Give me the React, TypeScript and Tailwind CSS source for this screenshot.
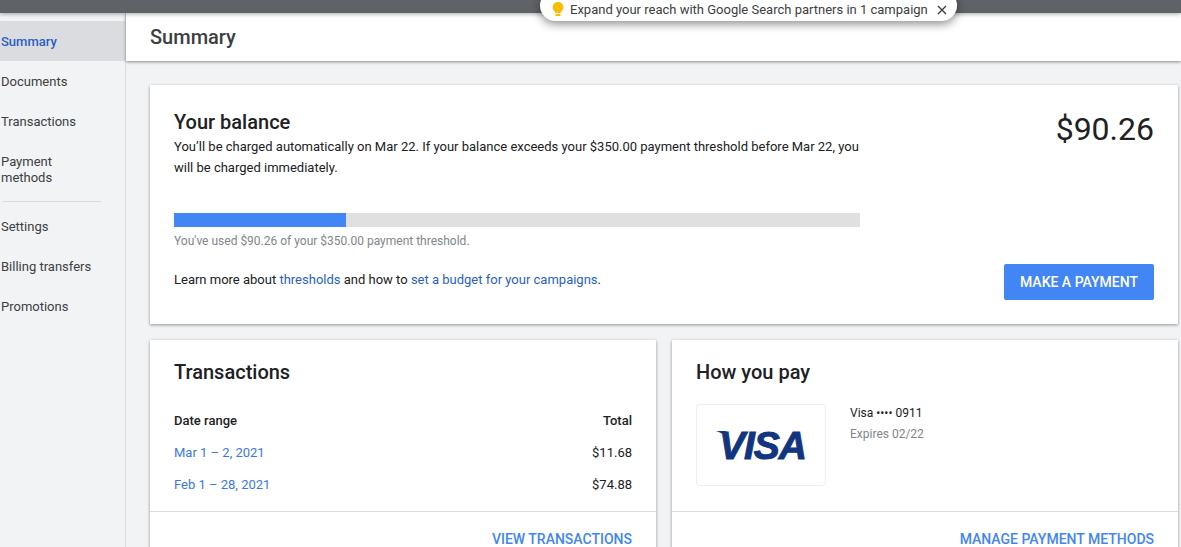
import type { FC } from "react";

const navTop = ["Documents", "Transactions"];
const navBottom = ["Settings", "Billing transfers", "Promotions"];

const NavItem: FC<{ label: string }> = ({ label }) => (
  <div className="h-10 flex items-center pl-[1px] pt-[2px] text-[13px] text-[#3c4043]">{label}</div>
);

const App: FC = () => {
  return (
    <div className="relative h-[547px] w-[1181px] overflow-hidden bg-[#f1f3f4] font-['Roboto',sans-serif]">
      <div className="relative z-10 h-[13px] bg-[#5f6368] shadow-[0_1px_4px_rgba(0,0,0,0.35)]" />

      {/* tip */}
      <div className="absolute left-[540px] top-[-10px] z-20 h-[31px] w-[417px] rounded-full bg-white shadow-[0_3px_10px_rgba(0,0,0,0.45)] flex items-center pt-[9px] pl-[10px] text-[13px] text-[#3c4043]">
        <svg width="16" height="16" viewBox="0 0 16 16" className="mt-[-2px]">
          <path d="M8 1a5.2 5.2 0 0 0-3 9.5V12h6v-1.5A5.2 5.2 0 0 0 8 1z" fill="#fbbc04" />
          <rect x="5.5" y="13" width="5" height="2" fill="#fbbc04" />
        </svg>
        <span className="ml-[4px]">Expand your reach with Google Search partners in 1 campaign</span>
        <svg width="10" height="10" viewBox="0 0 10 10" className="ml-[9px]" stroke="#3c4043" strokeWidth="1.4">
          <path d="M1 1l8 8M9 1l-8 8" />
        </svg>
      </div>

      <div className="flex h-[534px]">
        {/* sidebar */}
        <aside className="w-[126px] shrink-0 border-r border-[#dadce0] pt-2">
          <div className="h-10 flex items-center pl-[1px] pt-[2px] bg-[#dadce0] text-[13px] font-medium text-[#2a5fc4]">Summary</div>
          {navTop.map((n) => (
            <NavItem key={n} label={n} />
          ))}
          <div className="pl-[1px] pt-[13px] pb-[7px] text-[13px] leading-4 text-[#3c4043]">
            Payment
            <br />
            methods
          </div>
          <div className="ml-[2px] mr-6 mt-2 border-t border-[#dadce0]" />
          <div className="mt-1">
            {navBottom.map((n) => (
              <NavItem key={n} label={n} />
            ))}
          </div>
        </aside>

        <main className="flex-1 min-w-0">
          <header className="h-12 bg-white shadow-[0_1px_3px_rgba(0,0,0,0.45)] pl-6 flex items-center text-[20px] font-medium text-[#3c4043]">
            Summary
          </header>

          <div className="pl-6 pr-[3px] pt-6">
            {/* balance */}
            <section className="h-[239px] bg-white shadow-[0_1px_3px_rgba(0,0,0,0.4)] px-6 pt-[25px] flex justify-between">
              <div className="w-[686px]">
                <h2 className="text-[20px] leading-6 font-medium text-[#202124]">Your balance</h2>
                <p className="mt-[2px] text-[13px] leading-[21px] text-[#202124]">
                  You’ll be charged automatically on Mar 22. If your balance exceeds your $350.00 payment threshold before Mar 22, you will be charged immediately.
                </p>
                <div className="mt-[35px] h-[14px] bg-[#e0e0e0]">
                  <div className="h-full w-[172px] bg-[#4285f4]" />
                </div>
                <p className="mt-[6px] text-[12px] leading-4 text-[#80868b]">
                  You've used $90.26 of your $350.00 payment threshold.
                </p>
                <p className="mt-[21px] text-[13px] leading-5 text-[#202124] whitespace-nowrap">
                  Learn more about <span className="text-[#2a5fc4]">thresholds</span> and how to{" "}
                  <span className="text-[#2a5fc4]">set a budget for your campaigns</span>.
                </p>
              </div>
              <div className="flex flex-col items-end">
                <div className="mt-[-3px] text-[32px] leading-[44px] text-[#202124]">$90.26</div>
                <button className="mt-[113px] h-9 w-[150px] rounded-[2px] bg-[#4285f4] text-[14px] font-medium text-white">
                  MAKE A PAYMENT
                </button>
              </div>
            </section>

            <div className="mt-4 grid grid-cols-2 gap-4">
              {/* transactions */}
              <section className="h-[300px] bg-white shadow-[0_1px_3px_rgba(0,0,0,0.4)]">
                <div className="h-[172px] border-b border-[#dadce0] px-6 pt-[20px]">
                  <h2 className="text-[20px] leading-6 font-medium text-[#202124]">Transactions</h2>
                  <div className="mt-[29px] flex justify-between text-[13px] font-medium leading-4 text-[#202124]">
                    <span>Date range</span>
                    <span>Total</span>
                  </div>
                  <div className="mt-4 flex justify-between text-[13px] leading-4">
                    <span className="text-[#3b78e7]">Mar 1 – 2, 2021</span>
                    <span className="text-[#202124]">$11.68</span>
                  </div>
                  <div className="mt-4 flex justify-between text-[13px] leading-4">
                    <span className="text-[#3b78e7]">Feb 1 – 28, 2021</span>
                    <span className="text-[#202124]">$74.88</span>
                  </div>
                </div>
                <div className="px-6 pt-[19px] text-right text-[14px] font-medium leading-4 text-[#4285f4]">VIEW TRANSACTIONS</div>
              </section>

              {/* how you pay */}
              <section className="h-[300px] bg-white shadow-[0_1px_3px_rgba(0,0,0,0.4)]">
                <div className="h-[172px] border-b border-[#dadce0] px-6 pt-[20px]">
                  <h2 className="text-[20px] leading-6 font-medium text-[#202124]">How you pay</h2>
                  <div className="mt-[20px] flex gap-6">
                    <div className="h-[82px] w-[130px] rounded border border-[#eeeeee] flex items-center justify-center">
                      <span className="relative ml-[3px] font-['Liberation_Sans',sans-serif] text-[39px] font-bold italic leading-none tracking-[-1px] text-[#12357f] [-webkit-text-stroke:1px_#12357f]">
                        VISA
                        <svg width="14" height="10" viewBox="0 0 14 10" className="absolute left-[-3px] top-[5px]">
                          <path d="M0 0h10l3 9C11 5 6 2 0 0z" fill="#12357f" />
                        </svg>
                      </span>
                    </div>
                    <div className="pt-[1px]">
                      <div className="text-[12px] leading-4 text-[#202124]">Visa •••• 0911</div>
                      <div className="mt-[5px] text-[12px] leading-4 text-[#80868b]">Expires 02/22</div>
                    </div>
                  </div>
                </div>
                <div className="px-6 pt-[19px] text-right text-[14px] font-medium leading-4 text-[#4285f4]">MANAGE PAYMENT METHODS</div>
              </section>
            </div>
          </div>
        </main>
      </div>
    </div>
  );
};

export default App;
